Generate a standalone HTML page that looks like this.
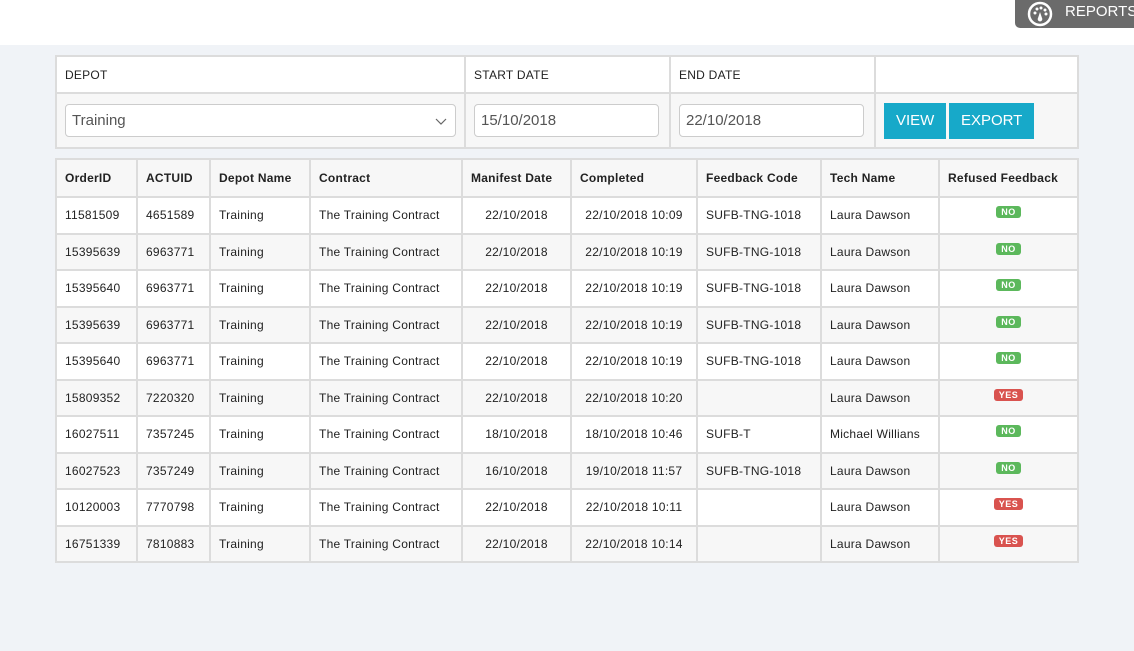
<!DOCTYPE html>
<html><head><style>
*{box-sizing:border-box;margin:0;padding:0}
body{width:1134px;height:651px;background:#f0f3f7;font-family:"Liberation Sans",Arial,sans-serif;color:#222;position:relative;overflow:hidden}
.top{position:absolute;left:0;top:0;width:1134px;height:45px;background:#fff}
.rep{position:absolute;left:1015px;top:0;width:125px;height:28px;background:#6b6b6b;border-radius:0 0 0 5px;color:#fff;font-size:15px}
.rep span{position:absolute;left:50px;top:3px}
table{position:absolute;border-collapse:collapse;table-layout:fixed;font-size:12px;letter-spacing:.25px}
td,th{border:2px solid #dcdcdc;padding:0 8px;text-align:left;white-space:nowrap}
.f{left:55px;top:55px;width:1022px;background:#fff}
.f td{font-size:12px}
.f tr.r2 td{background:#f7f7f7}
.inp{height:33px;border:1px solid #ccc;border-radius:4px;background:#fff;font-size:15px;color:#555;padding:7px 6px;position:relative;letter-spacing:0}
.btn{display:inline-block;background:#17a9c9;color:#fff;font-size:15px;height:36px;line-height:36px;padding:0 12px;vertical-align:top;letter-spacing:0}
.m{left:55px;top:158px;width:1022px}
.m th{background:#f7f7f7;font-weight:bold;height:38px}
.m td{height:36.5px}
.m tr:nth-child(odd) td{background:#f7f7f7}
.m tr:nth-child(even) td{background:#fff}
.c{text-align:center}
.b{display:inline-block;font-size:9px;font-weight:bold;color:#fff;border-radius:3px;padding:1px 5px;position:relative;top:-4px;letter-spacing:.5px}
.no{background:#5cb85c}.yes{background:#d9534f}
</style></head><body>
<div class="top"></div>
<div class="rep"><svg style="position:absolute;left:12px;top:1px" width="26" height="26" viewBox="0 0 26 26"><circle cx="13" cy="13" r="11" fill="none" stroke="#fff" stroke-width="2.5"/><circle cx="8" cy="12" r="1.5" fill="#fff"/><circle cx="10" cy="8" r="1.5" fill="#fff"/><circle cx="14" cy="7" r="1.5" fill="#fff"/><circle cx="18" cy="9" r="1.5" fill="#fff"/><circle cx="19" cy="13" r="1.5" fill="#fff"/><path d="M13 11 L15 17 A2.3 2.3 0 1 1 11 17 Z" fill="#fff"/></svg><span>REPORTS</span></div>

<table class="f">
<colgroup><col style="width:409px"><col style="width:205px"><col style="width:205px"><col style="width:203px"></colgroup>
<tr style="height:37px"><td>DEPOT</td><td>START DATE</td><td>END DATE</td><td></td></tr>
<tr class="r2" style="height:55px"><td><div class="inp">Training<svg style="position:absolute;right:8px;top:13px" width="12" height="8" viewBox="0 0 12 8"><path d="M1 1 L6 6 L11 1" fill="none" stroke="#666" stroke-width="1.2"/></svg></div></td><td><div class="inp" style="width:185px">15/10/2018</div></td><td><div class="inp" style="width:185px">22/10/2018</div></td><td><span class="btn">VIEW</span> <span class="btn" style="margin-left:-1px">EXPORT</span></td></tr>
</table>

<table class="m">
<colgroup><col style="width:81px"><col style="width:73px"><col style="width:100px"><col style="width:152px"><col style="width:109px"><col style="width:126px"><col style="width:124px"><col style="width:118px"><col style="width:139px"></colgroup>
<tr><th>OrderID</th><th>ACTUID</th><th>Depot Name</th><th>Contract</th><th>Manifest Date</th><th>Completed</th><th>Feedback Code</th><th>Tech Name</th><th>Refused Feedback</th></tr>
<tr><td>11581509</td><td>4651589</td><td>Training</td><td>The Training Contract</td><td class="c">22/10/2018</td><td class="c">22/10/2018 10:09</td><td>SUFB-TNG-1018</td><td>Laura Dawson</td><td class="c"><span class="b no">NO</span></td></tr>
<tr><td>15395639</td><td>6963771</td><td>Training</td><td>The Training Contract</td><td class="c">22/10/2018</td><td class="c">22/10/2018 10:19</td><td>SUFB-TNG-1018</td><td>Laura Dawson</td><td class="c"><span class="b no">NO</span></td></tr>
<tr><td>15395640</td><td>6963771</td><td>Training</td><td>The Training Contract</td><td class="c">22/10/2018</td><td class="c">22/10/2018 10:19</td><td>SUFB-TNG-1018</td><td>Laura Dawson</td><td class="c"><span class="b no">NO</span></td></tr>
<tr><td>15395639</td><td>6963771</td><td>Training</td><td>The Training Contract</td><td class="c">22/10/2018</td><td class="c">22/10/2018 10:19</td><td>SUFB-TNG-1018</td><td>Laura Dawson</td><td class="c"><span class="b no">NO</span></td></tr>
<tr><td>15395640</td><td>6963771</td><td>Training</td><td>The Training Contract</td><td class="c">22/10/2018</td><td class="c">22/10/2018 10:19</td><td>SUFB-TNG-1018</td><td>Laura Dawson</td><td class="c"><span class="b no">NO</span></td></tr>
<tr><td>15809352</td><td>7220320</td><td>Training</td><td>The Training Contract</td><td class="c">22/10/2018</td><td class="c">22/10/2018 10:20</td><td></td><td>Laura Dawson</td><td class="c"><span class="b yes">YES</span></td></tr>
<tr><td>16027511</td><td>7357245</td><td>Training</td><td>The Training Contract</td><td class="c">18/10/2018</td><td class="c">18/10/2018 10:46</td><td>SUFB-T</td><td>Michael Willians</td><td class="c"><span class="b no">NO</span></td></tr>
<tr><td>16027523</td><td>7357249</td><td>Training</td><td>The Training Contract</td><td class="c">16/10/2018</td><td class="c">19/10/2018 11:57</td><td>SUFB-TNG-1018</td><td>Laura Dawson</td><td class="c"><span class="b no">NO</span></td></tr>
<tr><td>10120003</td><td>7770798</td><td>Training</td><td>The Training Contract</td><td class="c">22/10/2018</td><td class="c">22/10/2018 10:11</td><td></td><td>Laura Dawson</td><td class="c"><span class="b yes">YES</span></td></tr>
<tr><td>16751339</td><td>7810883</td><td>Training</td><td>The Training Contract</td><td class="c">22/10/2018</td><td class="c">22/10/2018 10:14</td><td></td><td>Laura Dawson</td><td class="c"><span class="b yes">YES</span></td></tr>
</table>
</body></html>
